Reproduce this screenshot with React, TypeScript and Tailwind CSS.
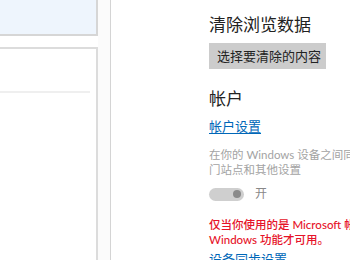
import React from "react";

export default function App() {
  const font = { fontFamily: '"Noto Sans", "Noto Sans CJK SC", sans-serif' };
  const smallFont = { fontFamily: 'Lato, "Noto Sans CJK SC", sans-serif' };
  return (
    <div className="w-[350px] h-[260px] overflow-hidden bg-white flex" style={font}>
      <div className="w-[98px] shrink-0 flex flex-col bg-white">
        <div className="h-[36px] bg-[#eef5fd] border-r-2 border-b-2 border-[#d6d6d6]" />
        <div className="h-[11px]" />
        <div className="flex-1 border-t-2 border-r-2 border-[#dcdcdc] bg-white">
          <div className="h-[42px]" />
          <div className="w-[90px] h-[2px] bg-[#efefef]" />
        </div>
      </div>
      <div className="w-[12px] shrink-0 bg-[#fbfbfb]" />
      <div className="w-[1px] shrink-0 bg-[#d4d4d4]" />
      <div className="flex-1 pl-[98px] whitespace-nowrap">
        <div className="mt-[14px] h-[22px] text-[17px] leading-[22px] text-[#222]">清除浏览数据</div>
        <div className="mt-[7px] w-[117px] h-[26px] bg-[#cccccc] text-[13px] leading-[26px] text-[#222] pl-[8px]">
          选择要清除的内容
        </div>
        <div className="mt-[19px] h-[22px] text-[17px] leading-[22px] text-[#222]">帐户</div>
        <div className="mt-[8px] h-[16px] text-[13px] leading-[16px] text-[#0067b8] underline underline-offset-2">帐户设置</div>
        <div className="mt-[13px] text-[11.5px] leading-[15px] text-[#a3a3a3]" style={smallFont}>
          <div>在你的 Windows 设备之间同步收藏夹、阅读列表、热</div>
          <div>门站点和其他设置</div>
        </div>
        <div className="mt-[10px] flex items-center h-[14px]">
          <div className="w-[35px] h-[13px] rounded-full bg-[#cfcfcf] flex items-center justify-end pr-[3px]">
            <div className="w-[8px] h-[8px] rounded-full bg-[#8a8a8a]" />
          </div>
          <span className="ml-[11px] text-[12px] leading-[14px] text-[#888]">开</span>
        </div>
        <div className="mt-[16px] text-[11.5px] leading-[15px] text-[#e6132a] font-medium" style={smallFont}>
          <div>仅当你使用的是 Microsoft 帐户登录时，此</div>
          <div>Windows 功能才可用。</div>
        </div>
        <div className="mt-[4px] text-[13px] leading-[16px] text-[#0067b8] underline">设备同步设置</div>
      </div>
    </div>
  );
}
